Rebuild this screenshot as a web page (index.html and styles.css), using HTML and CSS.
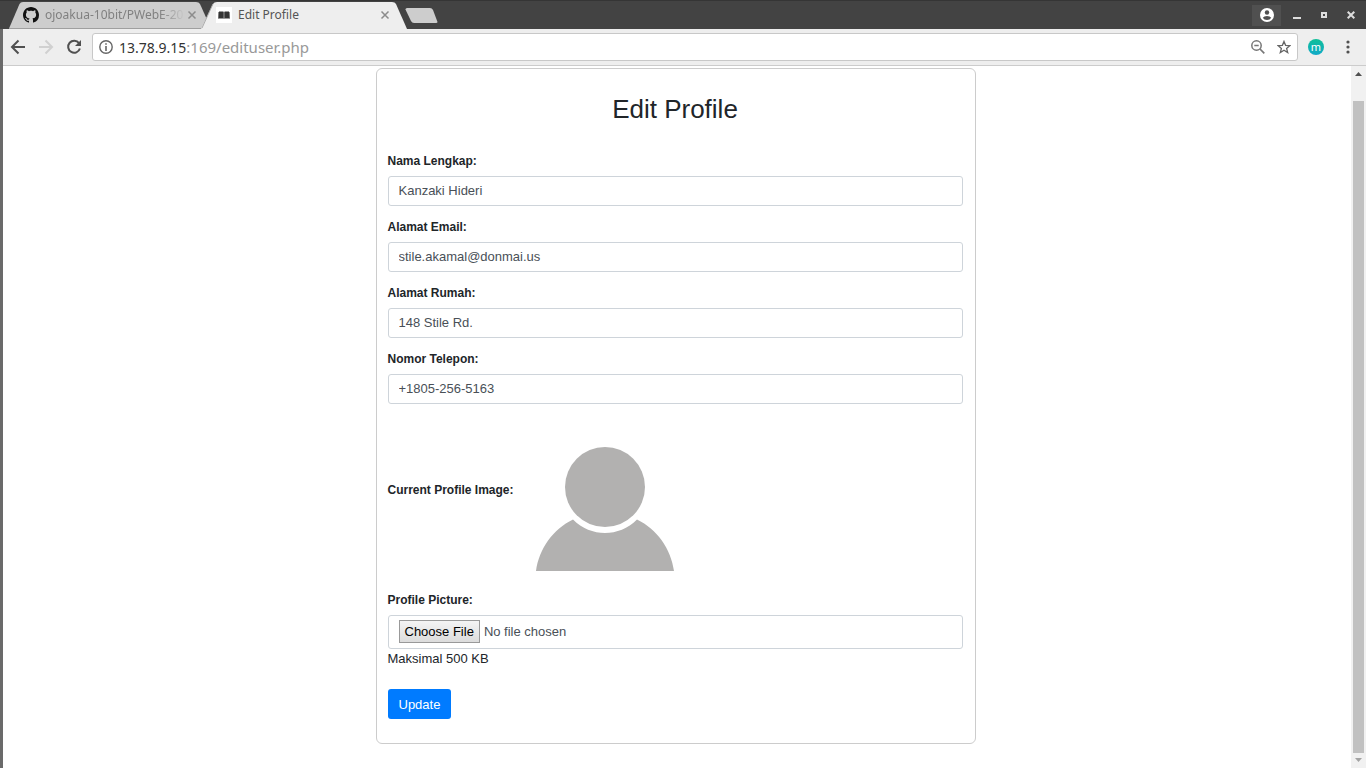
FILE: index.html
```html
<!DOCTYPE html>
<html lang="id">
<head>
<meta charset="utf-8">
<title>Edit Profile</title>
<link rel="stylesheet" href="styles.css">
</head>
<body>
<header class="tabbar">
  <div class="tabs">
    <div class="tab">
      <svg class="tab-shape" viewBox="0 0 202 29" preserveAspectRatio="none" aria-hidden="true"><path d="M0 28.500L10.500 3Q11.500 1 14 1H187Q190 1 191 3L202 28.500Z" fill="#cdcdcd"/><path d="M0 28.500H202" stroke="#a0a0a0"/></svg>
      <svg class="favicon" viewBox="0 0 16 16" aria-hidden="true"><path fill="#111" d="M8 0C3.580 0 0 3.580 0 8c0 3.540 2.290 6.530 5.470 7.590.4.070.55-.17.55-.38 0-.19-.01-.82-.01-1.490-2.010.37-2.530-.49-2.690-.94-.09-.23-.48-.94-.82-1.130-.28-.15-.68-.52-.01-.53.63-.01 1.080.58 1.230.82.72 1.210 1.870.87 2.330.66.07-.52.28-.87.51-1.070-1.780-.2-3.640-.89-3.640-3.950 0-.87.31-1.590.82-2.150-.08-.2-.36-1.020.08-2.120 0 0 .67-.21 2.200.82.64-.18 1.320-.27 2-.27s1.360.09 2 .27c1.530-1.040 2.200-.82 2.200-.82.44 1.100.16 1.920.08 2.120.51.56.82 1.270.82 2.150 0 3.070-1.870 3.750-3.650 3.950.29.25.54.73.54 1.480 0 1.070-.01 1.930-.01 2.200 0 .21.15.46.55.38A8.010 8.010 0 0 0 16 8c0-4.420-3.580-8-8-8z"/></svg>
      <span class="tab-title tab-title-long">ojoakua-10bit/PWebE-20</span>
      <button class="tab-close" aria-label="Close tab"><svg width="10" height="10" viewBox="0 0 10 10"><path d="M1.500 1.500L8.500 8.500M8.500 1.500L1.500 8.500" stroke="#8c8c8c" stroke-width="1.500"/></svg></button>
    </div>
    <div class="tab tab-active">
      <svg class="tab-shape" viewBox="0 0 206 29" preserveAspectRatio="none" aria-hidden="true"><path d="M0 29L12 3Q13 1 16 1H191Q194 1 195 3L206 29Z" fill="#eeeeee"/><path d="M1 28L12 3" stroke="#aaa" fill="none"/></svg>
      <svg class="favicon" viewBox="0 0 16 16" aria-hidden="true"><path fill="#fff" d="M0 0h16v16H0z"/><path fill="#999" d="M2 5h12v7H2z"/><path fill="#333" d="M3 4.500h4.500v6.500H2.500zM8.500 4.500H13L13.500 11H8.500z"/></svg>
      <span class="tab-title">Edit Profile</span>
      <button class="tab-close" aria-label="Close tab"><svg width="10" height="10" viewBox="0 0 10 10"><path d="M1.500 1.500L8.500 8.500M8.500 1.500L1.500 8.500" stroke="#8c8c8c" stroke-width="1.500"/></svg></button>
    </div>
    <button class="new-tab" aria-label="New tab"><svg width="33" height="15" viewBox="0 0 33 15"><path d="M2 0H25Q27 0 28 2L32.500 14Q32.500 15 31 15H9Q7 15 6 13L.500 1.500Q.500 0 2 0Z" fill="#cdcdcd"/></svg></button>
  </div>
  <div class="window-buttons">
    <button class="account" aria-label="Account"><svg width="14" height="14" viewBox="0 0 14 14"><circle cx="7" cy="7" r="7" fill="#fff"/><circle cx="7" cy="4.500" r="2.200" fill="#505050"/><path d="M2.800 9.800Q4 8 7 8T11.200 9.800Q10 12 7 12T2.800 9.800Z" fill="#505050"/></svg></button>
    <button aria-label="Minimize"><svg width="8" height="8" viewBox="0 0 8 8"><path d="M0 6h8v2H0z" fill="#ddd"/></svg></button>
    <button aria-label="Maximize"><svg width="6" height="6" viewBox="0 0 6 6"><path d="M1 1h4v4H1z" fill="none" stroke="#ddd" stroke-width="2"/></svg></button>
    <button aria-label="Close window"><svg width="8" height="8" viewBox="0 0 8 8"><path d="M.7.7L7.300 7.300M7.300.7L.7 7.300" stroke="#ddd" stroke-width="2"/></svg></button>
  </div>
</header>
<nav class="toolbar">
  <div class="nav-buttons">
    <button aria-label="Back"><svg width="16" height="16" viewBox="0 0 16 16"><path d="M15 8H2.500M8.500 1.500L2 8L8.500 14.500" fill="none" stroke="#505050" stroke-width="2"/></svg></button>
    <button aria-label="Forward"><svg width="16" height="16" viewBox="0 0 16 16"><path d="M1 8H13.500M7.500 1.500L14 8L7.500 14.500" fill="none" stroke="#d0d0d0" stroke-width="2"/></svg></button>
    <button aria-label="Reload"><svg width="16" height="16" viewBox="0 0 16 16"><path d="M13 4.200A6 6 0 1 0 13.900 9.500" fill="none" stroke="#505050" stroke-width="2"/><path d="M15 1V7H9Z" fill="#505050"/></svg></button>
  </div>
  <div class="address">
    <svg width="14" height="14" viewBox="0 0 14 14" aria-hidden="true"><circle cx="7" cy="7" r="6.200" fill="none" stroke="#666" stroke-width="1.400"/><path d="M6.200 3.200h1.600v1.600H6.200zM6.200 6h1.600v5H6.200z" fill="#666"/></svg>
    <div class="url"><span class="host">13.78.9.15</span>:169/edituser.php</div>
    <button aria-label="Zoom"><svg width="14" height="14" viewBox="0 0 14 14"><circle cx="5.500" cy="5.500" r="4.700" fill="none" stroke="#777" stroke-width="1.500"/><path d="M3.300 5.500h4.400M9 9l4.300 4.300" stroke="#777" stroke-width="1.700"/></svg></button>
    <button aria-label="Bookmark"><svg width="14" height="14" viewBox="0 0 14 14"><path d="M7 1.400L8.600 5.300L12.900 5.600L9.600 8.400L10.700 12.600L7 10.300L3.300 12.600L4.400 8.400L1.100 5.600L5.400 5.300Z" fill="none" stroke="#666" stroke-width="1.300"/></svg></button>
  </div>
  <button class="extension" aria-label="Extension">m</button>
  <button class="menu" aria-label="Menu"><svg width="4" height="14" viewBox="0 0 4 14"><g fill="#505050"><circle cx="2" cy="2" r="1.600"/><circle cx="2" cy="7" r="1.600"/><circle cx="2" cy="12" r="1.600"/></g></svg></button>
</nav>
<div class="viewport">
  <main class="page">
    <form class="card">
      <h1 class="title">Edit Profile</h1>
      <div class="group">
        <label for="name">Nama Lengkap:</label>
        <input class="control" id="name" type="text" value="Kanzaki Hideri">
      </div>
      <div class="group">
        <label for="email">Alamat Email:</label>
        <input class="control" id="email" type="email" value="stile.akamal@donmai.us">
      </div>
      <div class="group">
        <label for="address">Alamat Rumah:</label>
        <input class="control" id="address" type="text" value="148 Stile Rd.">
      </div>
      <div class="group">
        <label for="phone">Nomor Telepon:</label>
        <input class="control" id="phone" type="text" value="+1805-256-5163">
      </div>
      <div class="current">
        <span class="current-label">Current Profile Image:</span>
        <svg class="avatar" viewBox="0 0 160 164" role="img" aria-label="Profile image"><circle cx="80" cy="72" r="40" fill="#b2b1b0"/><path d="M11 156C14 134 28 114 48 104.500C66 122.500 94 122.500 112 104.500C132 114 146 134 149 156Z" fill="#b2b1b0"/></svg>
      </div>
      <div class="group">
        <label for="picture">Profile Picture:</label>
        <input class="control control-file" id="picture" type="file">
        <span class="hint">Maksimal 500 KB</span>
      </div>
      <button class="submit" type="submit">Update</button>
    </form>
  </main>
  <div class="scrollbar" aria-hidden="true">
    <svg width="7" height="4" viewBox="0 0 7 4"><path d="M0 4L3.500 0L7 4Z" fill="#505050"/></svg>
    <div class="thumb"></div>
    <svg width="7" height="4" viewBox="0 0 7 4"><path d="M0 0L3.500 4L7 0Z" fill="#a3a3a3"/></svg>
  </div>
</div>
</body>
</html>
```
FILE: styles.css
```css
* { box-sizing: border-box; }

body {
  margin: 0;
  height: 100vh;
  display: flex;
  flex-direction: column;
  overflow: hidden;
  background: #fff;
  color: #212529;
  font-family: "Liberation Sans", Arial, sans-serif;
  font-size: 13px;
  line-height: 20px;
}

/* window edge, drawn over toolbar and page */
body::before {
  content: "";
  position: absolute;
  left: 0;
  top: 29px;
  bottom: 0;
  width: 3px;
  background: #6a6a6a;
  z-index: 3;
}

button {
  display: flex;
  align-items: center;
  justify-content: center;
  padding: 0;
  border: 0;
  background: none;
  font-family: inherit;
}

svg { display: block; flex: none; }

.tabbar {
  display: flex;
  justify-content: space-between;
  height: 29px;
  background: #434343;
  border-top: 1px solid #353535;
  font-family: "Noto Sans", sans-serif;
}

.tabs { display: flex; padding-left: 9px; }

.tab {
  position: relative;
  display: flex;
  align-items: center;
  width: 202px;
  padding: 0 14px;
  gap: 6px;
  color: #808080;
  font-size: 12px;
}

.tab-active {
  width: 206px;
  margin-left: -10px;
  padding: 0 17px 0 15px;
  z-index: 1;
  color: #555;
}

.tab-shape { position: absolute; left: 0; top: 0; width: 100%; height: 100%; }
.favicon { position: relative; width: 16px; height: 16px; }
.tab-title { position: relative; flex: 1; min-width: 0; white-space: nowrap; }
.tab-title-long {
  -webkit-mask-image: linear-gradient(to right, #000 82%, transparent);
  mask-image: linear-gradient(to right, #000 82%, transparent);
}
.tab-close { position: relative; }
.tab-title-long + .tab-close { margin-left: -4px; }
.new-tab { margin-left: -2px; }

.window-buttons { display: flex; align-items: center; gap: 20px; padding-right: 11px; }
.window-buttons .account { width: 29px; height: 21px; background: #505050; margin-right: -8px; }

.toolbar {
  display: flex;
  align-items: center;
  height: 37px;
  padding: 0 16px 0 10px;
  background: #eee;
  border-bottom: 1px solid #ccc;
}

.nav-buttons { display: flex; gap: 12px; margin-right: 10px; }

.address {
  flex: 1;
  display: flex;
  align-items: center;
  gap: 12px;
  height: 28px;
  padding: 0 6px;
  background: #fff;
  border: 1px solid #c8c8c8;
  border-radius: 3px;
}

.url {
  flex: 1;
  margin-left: -6px;
  color: #999;
  font-family: "Noto Sans", sans-serif;
  font-size: 15px;
}

.host { color: #333; font-size: 14px; }

.extension {
  width: 16px;
  height: 16px;
  margin: 0 22px 0 10px;
  border-radius: 50%;
  background: linear-gradient(#0fbf98, #10a9c8);
  color: #fff;
  font-family: "Noto Sans", sans-serif;
  font-size: 11px;
  line-height: 14px;
}

.viewport { flex: 1; display: flex; min-height: 0; }
.page { flex: 1; overflow: hidden; padding-top: 2px; }

.card {
  max-width: 600px;
  margin: 0 auto;
  padding: 24px 12px 24px 11px;
  border: 1px solid #ccc;
  border-radius: 6px;
}

.title {
  margin: 0 0 26px;
  font-size: 26px;
  font-weight: 400;
  line-height: 32px;
  text-align: center;
}

.group { margin-bottom: 11px; }

.group label, .current-label {
  display: block;
  font-size: 12px;
  font-weight: 700;
}

.group label { margin-bottom: 5px; }

.control {
  display: block;
  width: 100%;
  height: 30px;
  padding: 0 10px 2px;
  border: 1px solid #ced4da;
  border-radius: 3px;
  background: #fff;
  color: #495057;
  font-family: inherit;
  font-size: 13px;
}

.control-file { height: 34px; padding: 4px 10px; }

.control-file::file-selector-button {
  height: 23px;
  margin: 0 4px 0 0;
  padding: 0 5px;
  border: 1px solid #999;
  border-radius: 0;
  background: linear-gradient(#f4f4f4, #dcdcdc);
  color: #000;
  font-family: inherit;
  font-size: 13px;
}

.current {
  display: flex;
  align-items: center;
  gap: 11px;
  margin-bottom: 11px;
}

.current-label { margin-bottom: 14px; }
.avatar { width: 160px; height: 164px; }
.hint { display: block; }

.submit {
  height: 30px;
  margin-top: 20px;
  padding: 0 11px;
  border-radius: 3px;
  background: #007bff;
  color: #fff;
  font-size: 13px;
}

.scrollbar {
  display: flex;
  flex-direction: column;
  align-items: center;
  width: 15px;
  padding: 6px 0;
  background: #f1f1f1;
}

.thumb { flex: 1; width: 11px; margin: 25px 0 5px; background: #c1c1c1; }
```
